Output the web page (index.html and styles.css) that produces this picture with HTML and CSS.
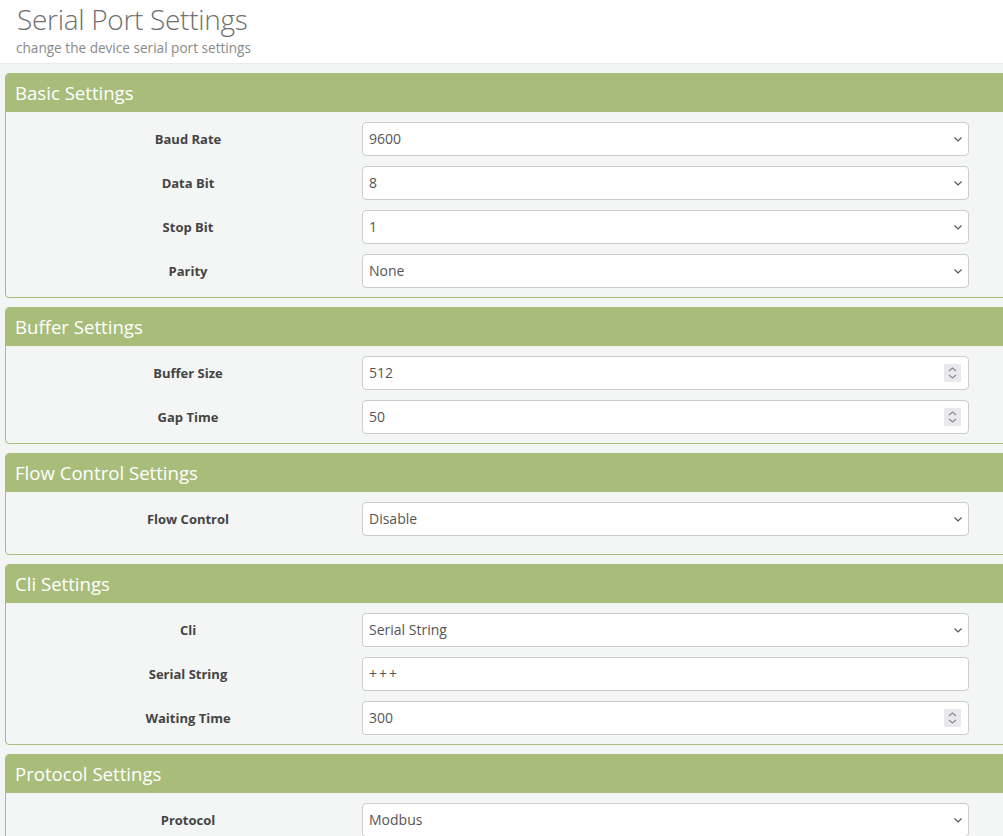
FILE: index.html
```html
<!DOCTYPE html>
<html lang="en">
<head>
<meta charset="utf-8">
<title>Serial Port Settings</title>
<link rel="stylesheet" href="styles.css">
</head>
<body>
<header class="page-header">
  <h1 class="page-title">Serial Port Settings</h1>
  <p class="page-subtitle">change the device serial port settings</p>
</header>
<main class="content">
  <section class="panel">
    <h2 class="panel-heading">Basic Settings</h2>
    <div class="panel-body">
      <div class="form-row"><label class="form-label">Baud Rate</label><div class="control select">9600<svg class="chev" viewBox="0 0 8 5"><path d="M0.5 0.5 L4 4 L7.5 0.5"/></svg></div></div>
      <div class="form-row"><label class="form-label">Data Bit</label><div class="control select">8<svg class="chev" viewBox="0 0 8 5"><path d="M0.5 0.5 L4 4 L7.5 0.5"/></svg></div></div>
      <div class="form-row"><label class="form-label">Stop Bit</label><div class="control select">1<svg class="chev" viewBox="0 0 8 5"><path d="M0.5 0.5 L4 4 L7.5 0.5"/></svg></div></div>
      <div class="form-row"><label class="form-label">Parity</label><div class="control select">None<svg class="chev" viewBox="0 0 8 5"><path d="M0.5 0.5 L4 4 L7.5 0.5"/></svg></div></div>
    </div>
  </section>
  <section class="panel">
    <h2 class="panel-heading">Buffer Settings</h2>
    <div class="panel-body">
      <div class="form-row"><label class="form-label">Buffer Size</label><div class="control number">512<span class="spin"><svg viewBox="0 0 17 18"><path d="M5 7 L8.5 4 L12 7 M5 11 L8.5 14 L12 11"/></svg></span></div></div>
      <div class="form-row"><label class="form-label">Gap Time</label><div class="control number">50<span class="spin"><svg viewBox="0 0 17 18"><path d="M5 7 L8.5 4 L12 7 M5 11 L8.5 14 L12 11"/></svg></span></div></div>
    </div>
  </section>
  <section class="panel">
    <h2 class="panel-heading">Flow Control Settings</h2>
    <div class="panel-body panel-body-loose">
      <div class="form-row"><label class="form-label">Flow Control</label><div class="control select">Disable<svg class="chev" viewBox="0 0 8 5"><path d="M0.5 0.5 L4 4 L7.5 0.5"/></svg></div></div>
    </div>
  </section>
  <section class="panel">
    <h2 class="panel-heading">Cli Settings</h2>
    <div class="panel-body">
      <div class="form-row"><label class="form-label">Cli</label><div class="control select">Serial String<svg class="chev" viewBox="0 0 8 5"><path d="M0.5 0.5 L4 4 L7.5 0.5"/></svg></div></div>
      <div class="form-row"><label class="form-label">Serial String</label><div class="control text spaced">+++</div></div>
      <div class="form-row"><label class="form-label">Waiting Time</label><div class="control number">300<span class="spin"><svg viewBox="0 0 17 18"><path d="M5 7 L8.5 4 L12 7 M5 11 L8.5 14 L12 11"/></svg></span></div></div>
    </div>
  </section>
  <section class="panel">
    <h2 class="panel-heading">Protocol Settings</h2>
    <div class="panel-body">
      <div class="form-row"><label class="form-label">Protocol</label><div class="control select">Modbus<svg class="chev" viewBox="0 0 8 5"><path d="M0.5 0.5 L4 4 L7.5 0.5"/></svg></div></div>
    </div>
  </section>
</main>
</body>
</html>
```

FILE: styles.css
```css
html, body {
  margin: 0;
  padding: 0;
  overflow: hidden;
  background: #f3f5f4;
  font-family: "Open Sans", "Noto Sans", sans-serif;
  color: #444;
}

.page-header {
  background: #ffffff;
  height: 64px;
  border-bottom: 1px solid #e8ebea;
  padding: 0 0 0 16px;
  box-sizing: border-box;
}

.page-title {
  margin: 0;
  padding-top: 1px;
  padding-left: 1px;
  font-size: 28px;
  font-weight: 300;
  line-height: 36px;
  color: #6f6f6f;
  letter-spacing: -0.3px;
}

.page-subtitle {
  margin: 0;
  padding-top: 1px;
  font-size: 13.6px;
  line-height: 20px;
  color: #8a8a8a;
}

.content {
  padding: 9px 0 0 5px;
}

.panel {
  width: 1010px;
  border: 1px solid #a9bd7b;
  border-radius: 4px;
  background: #f4f5f5;
  margin-bottom: 9px;
  overflow: hidden;
}

.panel-heading {
  margin: 0;
  height: 37px;
  line-height: 37px;
  padding: 0 9px;
  background: #a9bd7b;
  border-bottom: 1px solid #a9bd7b;
  color: #ffffff;
  font-size: 18.6px;
  font-weight: 400;
}

.panel-body {
  display: flex;
  flex-direction: column;
  gap: 10px;
  padding: 10px 0 9px 0;
}

.panel-body-loose {
  padding-bottom: 18px;
}

.form-row {
  display: flex;
  align-items: center;
  height: 34px;
}

.form-label {
  width: 356px;
  box-sizing: border-box;
  padding: 0 2px 0 10px;
  text-align: center;
  font-size: 13px;
  font-weight: 700;
  color: #444;
}

.control {
  position: relative;
  width: 607px;
  height: 34px;
  box-sizing: border-box;
  border: 1px solid #cccccc;
  border-radius: 4px;
  background: #ffffff;
  padding: 0 6px;
  font-size: 14px;
  line-height: 32px;
  color: #555;
}

.spaced {
  letter-spacing: 2px;
}

.chev {
  position: absolute;
  right: 6px;
  top: 14px;
  width: 8px;
  height: 5px;
  fill: none;
  stroke: #555;
  stroke-width: 1.2;
}

.spin {
  position: absolute;
  right: 7px;
  top: 7px;
  width: 17px;
  height: 18px;
  background: #e9e9ed;
  border-radius: 1px;
}

.spin svg {
  display: block;
  width: 17px;
  height: 18px;
  fill: none;
  stroke: #8a8a96;
  stroke-width: 1.2;
}
```
